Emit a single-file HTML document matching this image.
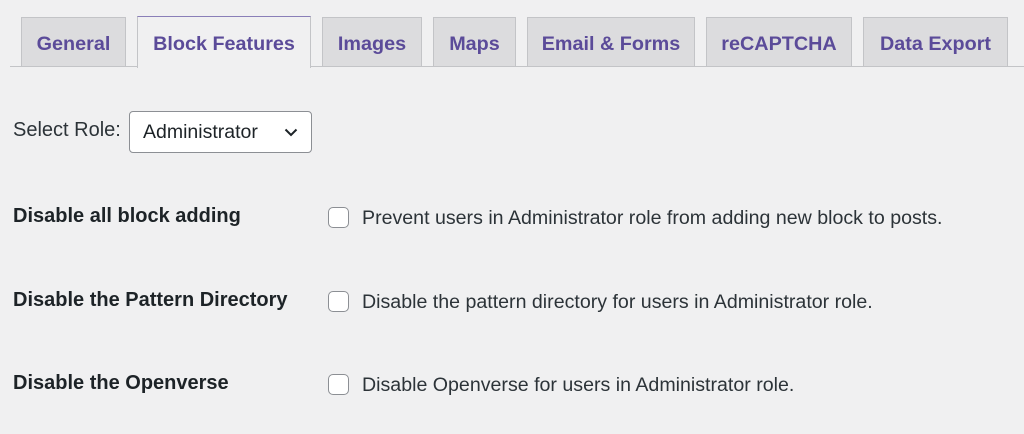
<!DOCTYPE html>
<html><head><style>
body{margin:0;width:1024px;height:434px;background:#f0f0f1;font-family:"Liberation Sans",sans-serif;position:relative;overflow:hidden;color:#1d2327}
.line{position:absolute;left:10px;right:0;top:66px;height:1px;background:#c3c4c7}
.tab{position:absolute;top:17px;height:49px;background:#dcdcde;border:1px solid #c3c4c7;border-bottom:none;box-sizing:border-box;color:#5b4b99;font-weight:bold;font-size:19.8px;text-align:center;line-height:52px}
.tab.a{background:#f0f0f1;top:16px;height:52px;border-top:1px solid #8a7fb8;z-index:2;line-height:54px}
.lbl{position:absolute;left:13px;font-weight:bold;font-size:20px}
.cb{position:absolute;left:328px;width:21px;height:21px;border:1.5px solid #8c8f94;border-radius:5px;background:#fff;box-sizing:border-box}
.t{position:absolute;left:362px;font-size:19.6px;color:#2c3338}
</style></head><body>
<div class="line"></div>
<div class="tab" style="left:21px;width:105px">General</div>
<div class="tab a" style="left:137px;width:174px">Block Features</div>
<div class="tab" style="left:322px;width:100px">Images</div>
<div class="tab" style="left:433px;width:83px">Maps</div>
<div class="tab" style="left:527px;width:168px">Email &amp; Forms</div>
<div class="tab" style="left:706px;width:146px">reCAPTCHA</div>
<div class="tab" style="left:863px;width:145px">Data Export</div>
<div style="position:absolute;left:13px;top:119px;font-size:20px;color:#2c3338">Select Role:</div>
<div style="position:absolute;left:129px;top:111px;width:183px;height:42px;box-sizing:border-box;border:1px solid #8c8f94;border-radius:4px;background:#fff;font-size:19.5px;padding:9px 0 0 13px">Administrator
<svg style="position:absolute;right:13px;top:16px" width="14" height="9" viewBox="0 0 14 9"><path d="M1.5 1.5L7 7 12.5 1.5" fill="none" stroke="#1d2327" stroke-width="2"/></svg></div>
<div class="lbl" style="top:205px">Disable all block adding</div>
<div class="cb" style="top:207px"></div>
<div class="t" style="top:207px">Prevent users in Administrator role from adding new block to posts.</div>
<div class="lbl" style="top:289px">Disable the Pattern Directory</div>
<div class="cb" style="top:291px"></div>
<div class="t" style="top:291px">Disable the pattern directory for users in Administrator role.</div>
<div class="lbl" style="top:372px">Disable the Openverse</div>
<div class="cb" style="top:374px"></div>
<div class="t" style="top:374px">Disable Openverse for users in Administrator role.</div>
</body></html>
